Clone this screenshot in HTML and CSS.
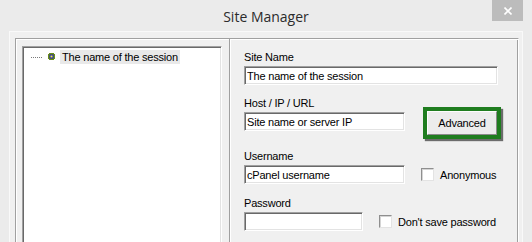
FILE: index.html
```html
<!doctype html>
<html lang="en">
  <head>
    <meta charset="UTF-8" />
    <title>Site Manager</title>
    <link rel="stylesheet" href="styles.css">
  </head>
  <body>
    <div class="window">
      <div class="titlebar">
        <span class="title">Site Manager</span>
        <span class="close">
          <svg width="8" height="8" viewBox="0 0 8 8">
            <path d="M0.5 0.5 L7.5 7.5 M7.5 0.5 L0.5 7.5" stroke="#fff" stroke-width="1.6" />
          </svg>
        </span>
      </div>

      <div class="client">
        <div class="frame">
          <div class="tree-pane">
            <div class="tree">
              <div class="node">
                <span class="dots"></span>
                <svg class="node-icon" width="7" height="7" viewBox="0 0 7 7">
                  <rect x="1" y="0" width="5" height="7" fill="#6b8e16" />
                  <rect x="0" y="1" width="7" height="5" fill="#6b8e16" />
                  <rect x="1.5" y="1.5" width="4" height="4" fill="#1c1cc0" />
                  <rect x="2.5" y="2.5" width="2" height="2" fill="#f4f43c" />
                </svg>
                <span class="node-label">The name of the session</span>
              </div>
            </div>
          </div>

          <div class="form-pane">
            <div class="row">
              <div class="field">
                <label>Site Name</label>
                <input class="input wide" type="text" value="The name of the session">
              </div>
            </div>

            <div class="row host-row">
              <div class="field">
                <label>Host / IP / URL</label>
                <input class="input medium" type="text" value="Site name or server IP">
              </div>
              <div class="highlight">
                <button class="button">Advanced</button>
              </div>
            </div>

            <div class="row user-row">
              <div class="field">
                <label>Username</label>
                <input class="input medium" type="text" value="cPanel username">
              </div>
              <div class="check">
                <span class="box"></span>
                <span>Anonymous</span>
              </div>
            </div>

            <div class="row pass-row">
              <div class="field">
                <label>Password</label>
                <input class="input short" type="password" value="">
              </div>
              <div class="check">
                <span class="box"></span>
                <span>Don't save password</span>
              </div>
            </div>
          </div>
        </div>
      </div>
    </div>
  </body>
</html>
```

FILE: styles.css
```css
* {
  margin: 0;
  padding: 0;
  box-sizing: border-box;
}

body {
  width: 532px;
  height: 242px;
  overflow: hidden;
  font-family: "Liberation Sans", Arial, sans-serif;
  font-size: 11px;
  letter-spacing: -0.2px;
  color: #000;
}

.window {
  height: 100%;
  display: flex;
  flex-direction: column;
  background: #ebebeb;
}

/* title bar */
.titlebar {
  height: 31px;
  flex-shrink: 0;
  display: grid;
  grid-template-columns: 1fr auto 1fr;
  align-items: start;
  padding: 0 9px;
}

.title {
  grid-column: 2;
  padding-top: 7px;
  font-family: "Open Sans", "Noto Sans", sans-serif;
  font-size: 14px;
  line-height: 19px;
  letter-spacing: 0;
  color: #2b2b2b;
}

.close {
  grid-column: 3;
  justify-self: end;
  width: 31px;
  height: 21px;
  background: #bcbcbc;
  display: flex;
  align-items: center;
  justify-content: center;
}

/* client area */
.client {
  flex: 1;
  min-height: 0;
  margin: 0 9px;
  padding: 6px 3px 0 5px;
  background: #f0f0f0;
  border: 1px solid #f9f9f9;
  border-bottom: none;
  display: flex;
}

.frame {
  flex: 1;
  display: flex;
  border-style: solid;
  border-width: 1px 1px 0 1px;
  border-color: #a0a0a0 #fff #fff #a0a0a0;
  box-shadow: inset 1px 1px #fff, inset -1px 0 #a0a0a0;
}

/* tree */
.tree-pane {
  display: flex;
  padding: 7px 7px 0 6px;
}

.tree {
  width: 200px;
  background: #fff;
  border-style: solid;
  border-width: 1px 1px 0 1px;
  border-color: #a0a0a0 #fff #fff #a0a0a0;
  box-shadow: inset 1px 1px #696969, inset -1px 0 #e3e3e3;
  padding: 2px 0 0 1px;
}

.node {
  display: flex;
  align-items: flex-start;
  height: 14px;
  margin-top: 1px;
}

.dots {
  width: 11px;
  height: 1px;
  margin: 7px 0 0 7px;
  background: repeating-linear-gradient(to right, #7a7a7a 0 1px, transparent 1px 2px);
}

.node-icon {
  margin: 3px 0 0 6px;
}

.node-label {
  margin-left: 5px;
  padding: 0 2px;
  line-height: 14px;
  background: #e9e9e9;
}

/* form */
.form-pane {
  flex: 1;
  border-left: 1px solid #a0a0a0;
  box-shadow: inset 1px 0 #fff;
  padding: 12px 0 0 14px;
}

.row {
  display: flex;
}

.field {
  display: flex;
  flex-direction: column;
}

.field label {
  line-height: 13px;
  margin-bottom: 2px;
}

.input {
  height: 19px;
  padding: 0 2px;
  font: inherit;
  letter-spacing: inherit;
  color: #000;
  background: #fff;
  outline: none;
  border-style: solid;
  border-width: 1px;
  border-color: #a0a0a0 #fff #fff #a0a0a0;
  box-shadow: inset 1px 1px #696969, inset -1px -1px #e3e3e3;
}

.input.wide {
  width: 254px;
}

.input.medium {
  width: 161px;
}

.input.short {
  width: 119px;
}

.host-row {
  margin-top: 12px;
  align-items: flex-start;
}

.highlight {
  margin: 10px 0 0 18px;
  width: 78px;
  height: 32px;
  border: 4px solid #1f7d1f;
  box-shadow: 2px 2px 1px rgba(0, 0, 0, 0.55);
  display: flex;
}

.button {
  flex: 1;
  font: inherit;
  letter-spacing: inherit;
  color: #000;
  background: #ececec;
  border-style: solid;
  border-width: 1px;
  border-color: #fdfdfd #8a8a8a #8a8a8a #fdfdfd;
}

.user-row {
  margin-top: 11px;
  align-items: flex-end;
}

.pass-row {
  margin-top: 13px;
  align-items: flex-end;
}

.check {
  display: flex;
  align-items: center;
  gap: 6px;
  margin: 0 0 2px 16px;
  line-height: 13px;
}

.check span:last-child {
  padding-top: 2px;
}

.box {
  width: 13px;
  height: 13px;
  background: #fff;
  border-style: solid;
  border-width: 1px;
  border-color: #8f8f8f #e3e3e3 #e3e3e3 #8f8f8f;
  box-shadow: inset 1px 1px #d5d5d5;
}
```
